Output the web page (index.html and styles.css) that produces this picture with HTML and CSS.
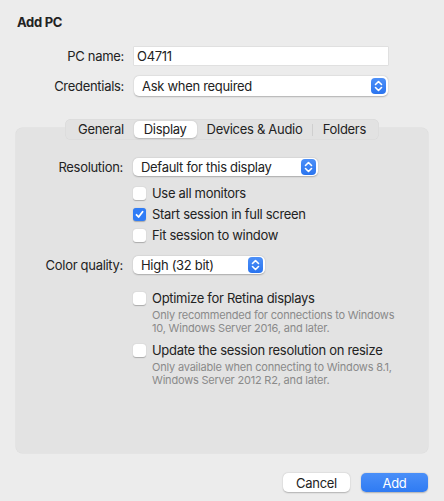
FILE: index.html
```html
<!DOCTYPE html>
<html>

<head>
	<title>Add PC</title>
	<link rel="stylesheet" href="styles.css">
</head>

<body>
	<div class="window">
		<div class="title">Add PC</div>

		<div class="form top">
			<label class="label">PC name:</label>
			<div class="textfield">O4711</div>

			<label class="label">Credentials:</label>
			<div class="popup wide">
				<span>Ask when required</span>
				<span class="stepper">
					<svg width="9" height="12" viewBox="0 0 9 12"><path d="M1.5 4.5 L4.5 1.5 L7.5 4.5 M1.5 7.5 L4.5 10.5 L7.5 7.5" fill="none" stroke="#fff" stroke-width="1.6" stroke-linecap="round" stroke-linejoin="round"/></svg>
				</span>
			</div>
		</div>

		<div class="panel">
			<div class="tabs">
				<div class="tab">General</div>
				<div class="tab selected">Display</div>
				<div class="tab">Devices &amp; Audio</div>
				<div class="sep"></div>
				<div class="tab">Folders</div>
			</div>

			<div class="form inner">
				<label class="label">Resolution:</label>
				<div class="popup res">
					<span>Default for this display</span>
					<span class="stepper">
						<svg width="9" height="12" viewBox="0 0 9 12"><path d="M1.5 4.5 L4.5 1.5 L7.5 4.5 M1.5 7.5 L4.5 10.5 L7.5 7.5" fill="none" stroke="#fff" stroke-width="1.6" stroke-linecap="round" stroke-linejoin="round"/></svg>
					</span>
				</div>

				<div></div>
				<div class="checks">
					<div class="check"><span class="box"></span>Use all monitors</div>
					<div class="check"><span class="box on">
						<svg width="11" height="11" viewBox="0 0 11 11"><path d="M2.5 5.8 L4.6 8 L8.6 2.8" fill="none" stroke="#fff" stroke-width="1.8" stroke-linecap="round" stroke-linejoin="round"/></svg>
					</span>Start session in full screen</div>
					<div class="check"><span class="box"></span>Fit session to window</div>
				</div>

				<label class="label color">Color quality:</label>
				<div class="popup qual">
					<span>High (32 bit)</span>
					<span class="stepper">
						<svg width="9" height="12" viewBox="0 0 9 12"><path d="M1.5 4.5 L4.5 1.5 L7.5 4.5 M1.5 7.5 L4.5 10.5 L7.5 7.5" fill="none" stroke="#fff" stroke-width="1.6" stroke-linecap="round" stroke-linejoin="round"/></svg>
					</span>
				</div>

				<div></div>
				<div class="options">
					<div class="option">
						<div class="check"><span class="box"></span>Optimize for Retina displays</div>
						<div class="hint">Only recommended for connections to Windows 10, Windows Server 2016, and later.</div>
					</div>
					<div class="option">
						<div class="check"><span class="box"></span>Update the session resolution on resize</div>
						<div class="hint">Only available when connecting to Windows 8.1, Windows Server 2012 R2, and later.</div>
					</div>
				</div>
			</div>
		</div>

		<div class="buttons">
			<button class="btn">Cancel</button>
			<button class="btn primary">Add</button>
		</div>
	</div>
</body>

</html>
```

FILE: styles.css
```css
* {
	margin: 0px;
	padding: 0px;
	box-sizing: border-box;
}

body {
	background: #ececec;
	font-family: Inter, "Noto Sans", sans-serif;
	font-size: 13px;
	letter-spacing: -0.3px;
	color: #222;
}

.window {
	width: 444px;
	height: 501px;
	padding: 14px 16px 0 16px;
	display: flex;
	flex-direction: column;
}

.title {
	font-weight: 700;
	font-size: 13px;
	line-height: 16px;
	margin-left: 1px;
}

.form {
	display: grid;
	align-items: center;
	column-gap: 10px;
}

.top {
	grid-template-columns: 108px 254px;
	row-gap: 11px;
	margin-top: 17px;
}

.label {
	text-align: right;
	line-height: 16px;
	white-space: nowrap;
}

.textfield {
	height: 18px;
	background: #fff;
	padding-left: 3px;
	line-height: 18px;
	box-shadow: 0 0 0 0.5px #d4d4d4;
}

.popup {
	height: 20px;
	background: #fff;
	border-radius: 5px;
	box-shadow: 0 0.5px 1.5px rgba(0, 0, 0, 0.25);
	display: flex;
	align-items: center;
	justify-content: space-between;
	padding: 0 2px 0 8px;
	white-space: nowrap;
}

.stepper {
	width: 15px;
	height: 16px;
	border-radius: 4px;
	background: linear-gradient(#4d90f8, #2a74ef);
	display: flex;
	align-items: center;
	justify-content: center;
}

.panel {
	margin-top: 32px;
	width: 412px;
	height: 325px;
	background: #e3e3e3;
	border-radius: 6px;
	box-shadow: 0 0 0 0.5px #dcdcdc;
}

.tabs {
	margin: -9px auto 0 auto;
	width: 314px;
	height: 21px;
	background: #e2e2e2;
	border-radius: 6px;
	box-shadow: inset 0 0 0 0.5px #d8d8d8;
	display: flex;
	align-items: center;
	justify-content: space-between;
	padding: 0 3px;
	white-space: nowrap;
}

.tab {
	height: 17px;
	line-height: 17px;
	padding: 0 10px;
	border-radius: 5px;
}

.tab.selected {
	background: #fff;
	box-shadow: 0 0.5px 1.5px rgba(0, 0, 0, 0.2);
}

.sep {
	width: 1px;
	height: 12px;
	background: #cfcfcf;
}

.inner {
	grid-template-columns: 107px 270px;
	row-gap: 0px;
	margin-top: 18px;
}

.res {
	width: 185px;
	height: 18px;
}

.qual {
	width: 132px;
	height: 18px;
	margin-top: 13px;
}

.color {
	margin-top: 13px;
}

.checks {
	margin-top: 9px;
	display: flex;
	flex-direction: column;
	gap: 5px;
}

.check {
	display: flex;
	align-items: center;
	height: 16px;
	line-height: 16px;
	white-space: nowrap;
}

.box {
	width: 13px;
	height: 13px;
	border-radius: 3px;
	background: #fff;
	box-shadow: 0 0.5px 1px rgba(0, 0, 0, 0.25);
	margin-right: 6px;
	display: flex;
	align-items: center;
	justify-content: center;
	flex-shrink: 0;
}

.box.on {
	background: #2f7cf6;
}

.options {
	margin-top: 16px;
	display: flex;
	flex-direction: column;
	gap: 7px;
}

.hint {
	padding-left: 19px;
	font-size: 11px;
	letter-spacing: -0.2px;
	line-height: 13px;
	color: #8a8a8a;
	margin-top: 3px;
	width: 265px;
}

.buttons {
	margin-top: 20px;
	display: flex;
	justify-content: flex-end;
	gap: 11px;
}

.btn {
	width: 67px;
	height: 19px;
	border: none;
	border-radius: 5px;
	background: #fff;
	font-family: Inter, "Noto Sans", sans-serif;
	font-size: 13px;
	letter-spacing: -0.3px;
	color: #222;
	box-shadow: 0 0.5px 1.5px rgba(0, 0, 0, 0.25);
}

.btn.primary {
	background: linear-gradient(#4a8ff8, #2f7bf3);
	color: #fff;
}
```
